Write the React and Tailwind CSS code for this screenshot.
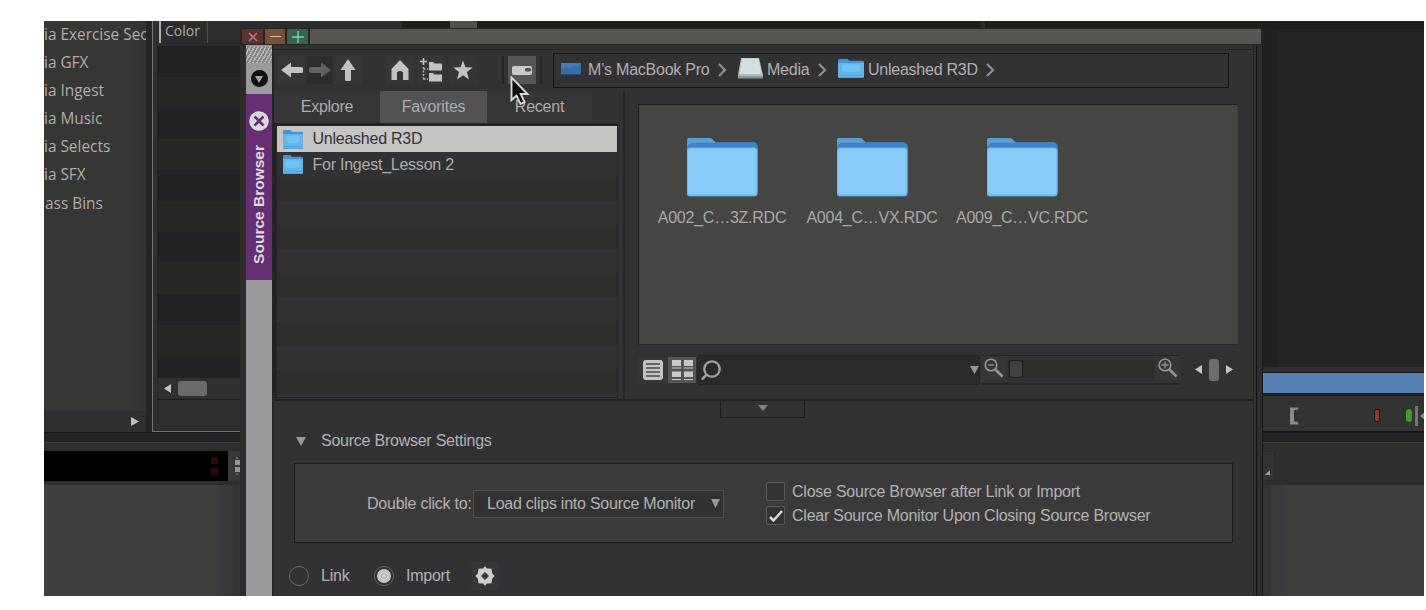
import React from "react";

const bins = ["ia Exercise Sec", "ia GFX", "ia Ingest", "ia Music", "ia Selects", "ia SFX", "ass Bins"];
const clips = ["A002_C…3Z.RDC", "A004_C…VX.RDC", "A009_C…VC.RDC"];

function Triangle({ dir = "down", className = "" }) {
  const points = {
    down: "0,0 10,0 5,10",
    left: "10,0 10,10 0,5",
    right: "0,0 10,5 0,10",
  };
  return (
    <svg viewBox="0 0 10 10" preserveAspectRatio="none" className={`shrink-0 ${className}`}>
      <polygon points={points[dir]} fill="currentColor" />
    </svg>
  );
}

function SmallFolder({ className = "" }) {
  return (
    <svg viewBox="0 0 21 19" preserveAspectRatio="none" className={`shrink-0 ${className}`}>
      <path d="M0 1.500Q0 0 1 0H7.500L9.500 1.700H20Q21 1.700 21 3V18Q21 19 20 19H1Q0 19 0 18Z" fill="#4396d0" />
      <path d="M0 4H21V17.500Q21 18.500 20 18.500H1Q0 18.500 0 17.500Z" fill="#63b4ea" />
      <path d="M3 5.500H18V12Q10.500 15 3 12Z" fill="#72c1f3" />
      <path d="M1 16.500H20" stroke="#4e9fd8" strokeWidth=".7" />
    </svg>
  );
}

function BigFolder() {
  return (
    <svg viewBox="0 0 72 60" className="h-[60px] w-[72px]">
      <path d="M1 4Q1 1 3 1H24Q26 1 28 4L30 5.500H68Q71.500 6 71.500 10V56Q71.500 59.500 68 59.500H4Q1 59.500 1 56Z" fill="#5a9fd6" />
      <path d="M1 13V9Q1 5.500 4 5.500H68Q71.500 6 71.500 10V13Z" fill="#3d83c8" />
      <path d="M1 5Q1 1 3 1H24Q26 1 29 5.500L5 6Q2 7 1 10Z" fill="#5b9fd0" />
      <path d="M1 14Q1 10.500 4 10.500H68Q71.500 10.500 71.500 14V55.500Q71.500 59 68 59H4Q1 59 1 55.500Z" fill="#6db9ee" />
      <path d="M2 14Q2 11.500 5 11.500H68Q70.500 11.500 70.500 14V54Q70.500 57.500 68 57.500H5Q2 57.500 2 54Z" fill="#89cbf8" />
    </svg>
  );
}

function ToolButton({ className = "", children }) {
  return <div className={`flex h-7 shrink-0 items-center justify-center ${className}`}>{children}</div>;
}

function Chevron() {
  return (
    <svg viewBox="0 0 9 14" className="h-[14px] w-[9px] shrink-0">
      <path d="M1 1L7 7L1 13" fill="none" stroke="#8f8f8f" strokeWidth="2.2" />
    </svg>
  );
}

function Magnifier({ plus }) {
  return (
    <svg viewBox="0 0 20 20" className="mb-0.5 h-5 w-5">
      <circle cx="7" cy="7" r="5.800" fill="none" stroke="#949494" strokeWidth="1.600" />
      <path d={plus ? "M3.500 7H10.500M7 3.500V10.500" : "M4 7H10"} stroke="#949494" strokeWidth="1.300" />
      <path d="M11.500 11.500L18.500 18.500" stroke="#949494" strokeWidth="2.600" />
    </svg>
  );
}

function BinSidebar() {
  return (
    <div className="flex w-[108px] shrink-0 flex-col bg-[#252527]">
      <div className="-mt-px w-[102px] flex-1 overflow-hidden bg-gradient-to-r from-[#363634] from-85% to-[#323234] font-['Open_Sans',sans-serif] text-[15.4px] text-[#adadad]">
        {bins.map((bin) => (
          <div key={bin} className="flex h-[28.2px] items-center whitespace-nowrap">
            {bin === "ass Bins" ? <span className="pl-px">{bin}</span> : bin}
          </div>
        ))}
      </div>
      <div className="flex h-[21px] w-[102px] items-center justify-end bg-[#2f2f31] pr-[7px] text-[#c0c0c0]">
        <Triangle dir="right" className="h-[9px] w-[8px]" />
      </div>
    </div>
  );
}

function ColorBin() {
  return (
    <div className="flex w-[250px] shrink-0 flex-col border-b border-l border-[#737373] bg-[#2f2f31] pl-1">
      <div className="flex h-[25px] items-start bg-[#2c2c2c] pl-0.5">
        <div className="flex h-[22px] w-[49px] items-start border-l-2 border-r border-l-[#b0b0b0] border-r-[#505054] pl-1 font-['Open_Sans',sans-serif] text-sm leading-[20px] text-[#a8a8a8]">
          Color
        </div>
      </div>
      <div className="flex flex-1 flex-col overflow-hidden">
        {[...Array(11)].map((_, i) => (
          <div key={i} className="h-[31px] shrink-0 odd:bg-[#222224] even:bg-[#272725]" />
        ))}
      </div>
      <div className="flex h-[22px] items-center gap-[7px] border-b border-[#1c1c1c] bg-[#303030] pb-px pl-[7px] text-[#c4c4c4]">
        <Triangle dir="left" className="h-[9px] w-[7px]" />
        <div className="h-[15px] w-[29px] rounded-[3px] bg-[#6b6b6b]" />
      </div>
      <div className="h-[31px]" />
    </div>
  );
}

function MonitorPane() {
  return (
    <div className="flex flex-1 flex-col bg-[#1e1e1c]">
      <div className="flex h-2 items-start">
        <div className="ml-[48px] h-[7px] w-[27px] bg-[#50504e]" />
        <div className="ml-[504px] h-[7px] w-1 bg-[#2c2c2c]" />
      </div>
      <div className="flex-1 bg-[#232325] pl-[860px]">
        <div className="h-full w-[16px] bg-[#20201e]" />
      </div>
      <div className="h-[6px] border-b border-[#161616] bg-[#303032]" />
      <div className="h-5 bg-[#5680b1]" />
      <div className="h-[3px] border-y border-[#161616] bg-[#2c2c2e]" />
      <div className="flex h-[36px] items-center border-b border-[#141414] bg-[#333331] pl-[888px] pt-[4px]">
        <svg viewBox="0 0 9 18" className="h-[18px] w-[9px] shrink-0">
          <path d="M0 .5H9L7 3H4V14.500H7L9 17.500H0Z" fill="#8b8b8f" />
        </svg>
        <div className="ml-[75px] h-[13px] w-[6px] shrink-0 rounded-[2px] border border-[#181818] bg-[#8d3b24]" />
        <div className="ml-[26px] h-[13px] w-[6px] shrink-0 rounded-[3px] bg-[#459a2d]" />
        <div className="ml-[3px] h-5 w-[3px] shrink-0 bg-[#76767a]" />
        <Triangle dir="left" className="ml-0.5 h-[10px] w-[6px] text-[#8d8d8d]" />
      </div>
    </div>
  );
}

// Everything that sits behind the Source Browser window
function Workspace() {
  return (
    <div className="flex h-full flex-col">
      <div className="flex h-[411px] shrink-0">
        <BinSidebar />
        <ColorBin />
        <MonitorPane />
      </div>
      <div className="h-[11px] shrink-0 border-b border-[#414141] border-t border-t-[#171717] bg-[#222224]" />
      <div className="flex h-[42px] shrink-0 bg-[#2e2e2c] pb-1 pt-2">
        <div className="flex w-[184px] flex-col items-end justify-center gap-1 bg-black pr-[10px]">
          <div className="h-[7px] w-[7px] bg-[#370707]" />
          <div className="h-[7px] w-[7px] bg-[#370707]" />
        </div>
        <div className="flex w-[40px] items-center bg-[#38383a] pl-[7px]">
          <svg viewBox="0 0 8 18" className="h-[18px] w-2">
            <path d="M0 3H5V8H0ZM0 10H5V15H0ZM6 3H8V8H6ZM6 10H8V15H6ZM1 .5H3V1.500H1ZM1 16.500H3V17.500H1Z" fill="#969696" />
          </svg>
        </div>
        <div className="ml-[967px] flex w-[40px] items-end justify-end border border-[#292929] bg-[#333331] pb-[5px] pr-1">
          <svg viewBox="0 0 5 5" className="h-[5px] w-[5px]">
            <polygon points="5,0 5,5 0,5" fill="#a0a0a0" />
          </svg>
        </div>
      </div>
      <div className="flex flex-1 bg-[#3e3e3c]">
        <div className="ml-[175px] w-[14px] bg-[#39393b]" />
        <div className="w-[1038px] bg-[#343434]" />
        <div className="w-[14px] bg-[#3a3a3c]" />
      </div>
    </div>
  );
}

function TitleBar() {
  return (
    <div className="flex h-[17px] shrink-0 gap-0.5 bg-[#252523] pb-px pl-0.5 pr-0.5 pt-px">
      <div className="flex w-[21px] items-center justify-center bg-[#5b3233]">
        <svg viewBox="0 0 10 10" className="h-[10px] w-[10px]">
          <path d="M1 1L9 9M9 1L1 9" stroke="#bf7470" strokeWidth="1.500" />
        </svg>
      </div>
      <div className="flex w-[20px] items-center justify-center bg-[#75503b]">
        <div className="h-[1.5px] w-[11px] bg-[#dfb9a7]" />
      </div>
      <div className="flex w-[21px] items-center justify-center bg-[#3b6150]">
        <svg viewBox="0 0 12 12" className="h-3 w-3">
          <path d="M6 0V12M0 6H12" stroke="#78d0a8" strokeWidth="1.500" />
        </svg>
      </div>
      <div className="flex-1 bg-[#565653]" />
    </div>
  );
}

function SideTab() {
  return (
    <div className="flex w-[26px] shrink-0 flex-col bg-[#9a9a9c] pt-px">
      <div className="h-[17px] bg-[repeating-linear-gradient(120deg,#b5b5b5_0_1.5px,#858585_1.5px_3.4px)]" />
      <div className="flex h-[31px] items-center justify-center bg-[#9b9b9b]">
        <div className="flex h-[17px] w-[17px] items-center justify-center rounded-full bg-[#10100f] text-[#a5a5a5]">
          <Triangle className="mt-px h-[7px] w-[8px]" />
        </div>
      </div>
      <div className="flex h-[186px] flex-col items-center bg-[#662f74] pt-[17px]">
        <svg viewBox="0 0 20 20" className="h-5 w-5 shrink-0">
          <circle cx="10" cy="10" r="9.800" fill="#dadada" />
          <path d="M5.500 5.500L14.500 14.500M14.500 5.500L5.500 14.500" stroke="#662f74" strokeWidth="2.600" />
        </svg>
        <div className="mt-[14px] rotate-180 whitespace-nowrap text-[15.5px] font-bold leading-[22px] text-[#dcdcdc] [writing-mode:vertical-rl]">
          Source Browser
        </div>
      </div>
    </div>
  );
}

function Toolbar() {
  return (
    <div className="mt-1 flex h-[42px] shrink-0 items-center border-t border-[#222222] pb-px pl-1">
      <ToolButton className="w-[27px] bg-[#363636]">
        <svg viewBox="0 0 22 16" className="h-4 w-[22px]">
          <path d="M0 8L10 0.500V5H20.500Q22 5 22 6.500V9.500Q22 11 20.500 11H10V15.500Z" fill="#c3c3c3" />
        </svg>
      </ToolButton>
      <ToolButton className="ml-0.5 w-[25px] bg-[#2c2c2c]">
        <svg viewBox="0 0 22 16" className="h-4 w-[22px]">
          <path d="M22 8L12 0.500V5H1.500Q0 5 0 6.500V9.500Q0 11 1.500 11H12V15.500Z" fill="#626264" />
        </svg>
      </ToolButton>
      <ToolButton className="ml-0.5 w-7 bg-[#363636]">
        <svg viewBox="0 0 16 22" className="h-[22px] w-4">
          <path d="M8 0L15.500 11H11V20.500Q11 22 9.500 22H6.500Q5 22 5 20.500V11H.5Z" fill="#c3c3c3" />
        </svg>
      </ToolButton>
      <ToolButton className="ml-6 w-7 bg-[#363636]">
        <svg viewBox="0 0 20 20" className="h-5 w-5">
          <path d="M10 0L18.500 9V20H13V13Q13 11 10 11Q7 11 7 13V20H1.500V9Z" fill="#c3c3c3" />
        </svg>
      </ToolButton>
      <ToolButton className="ml-[3px] w-[28px] bg-[#363636]">
        <svg viewBox="0 0 22 24" className="h-6 w-[22px]">
          <path d="M9 4H13L14.500 5.500H22V12.500H9ZM9 15H13L14.500 16.500H22V23.500H9Z" fill="#c3c3c3" />
          <path d="M3.500 0V7M0 3.500H7" stroke="#c3c3c3" strokeWidth="1.500" />
          <path d="M3.500 9V22M3.500 11H8M3.500 21H8" fill="none" stroke="#b5b5b5" strokeWidth="1.500" strokeDasharray="2 1.500" />
        </svg>
      </ToolButton>
      <ToolButton className="ml-[4px] w-7 bg-[#363636]">
        <svg viewBox="0 0 20 20" className="h-5 w-5">
          <polygon points="10,0.500 12.500,7.200 19.700,7.500 14,12 16,19.500 10,15.200 4,19.500 6,12 .3,7.500 7.500,7.200" fill="#c3c3c3" />
        </svg>
      </ToolButton>
      <div className="ml-[25px] h-7 w-0.5 shrink-0 bg-[#252525]" />
      <ToolButton className="ml-1 w-7 bg-[#565658]">
        <svg viewBox="0 0 20 9" className="h-[9px] w-5">
          <rect width="20" height="9" rx="2" fill="#cacaca" />
          <rect x="13" y="2" width="6" height="3.500" rx="1.500" fill="#505050" />
        </svg>
      </ToolButton>
      <div className="ml-[4px] h-7 w-0.5 shrink-0 bg-[#252525]" />
      <div className="ml-[11px] flex h-[35px] w-[676px] shrink-0 items-center border border-[#141414] bg-[#323234] pl-[7px] text-base tracking-[-0.24px] text-[#b0b0b0]">
        <svg viewBox="0 0 20 12" className="mb-0.5 h-3 w-5 shrink-0">
          <rect width="20" height="12" fill="#3a6da8" />
          <path d="M0 0H20L17 5L13 3L9 6L5 4L0 7Z" fill="#4379b4" />
          <path d="M0 11.500H20" stroke="#27486e" />
        </svg>
        <span className="ml-[7px] w-[122px] whitespace-nowrap">M’s MacBook Pro</span>
        <div className="ml-[8px]"><Chevron /></div>
        <svg viewBox="0 0 25 21" className="mb-[3px] ml-[11px] h-[21px] w-[25px] shrink-0">
          <path d="M3 0H21L25 17V20H0V17Z" fill="#b2b9bc" />
          <path d="M4 .5H20.500L23.500 16H1.500Z" fill="#d4dde1" />
          <path d="M0 18H25V20.500H0Z" fill="#8d9597" />
        </svg>
        <span className="ml-[4px] w-[43px]">Media</span>
        <div className="ml-2"><Chevron /></div>
        <SmallFolder className="mb-[3px] ml-[11px] h-[19px] w-[26px]" />
        <span className="ml-[4px] w-[110px] whitespace-nowrap">Unleashed R3D</span>
        <div className="ml-2"><Chevron /></div>
      </div>
    </div>
  );
}

function FavoritesPane() {
  return (
    <div className="flex w-[349px] shrink-0 flex-col text-base tracking-[-0.24px] text-[#adadad]">
      <div className="flex h-8 shrink-0">
        <div className="flex w-[106px] items-center justify-center bg-[#363636]">Explore</div>
        <div className="flex w-[107px] items-center justify-center bg-[#525254]">Favorites</div>
        <div className="flex w-[105px] items-center justify-center bg-[#363636]">Recent</div>
      </div>
      <div className="mr-[5px] flex h-[275px] flex-col overflow-hidden border-b border-l-[3px] border-r border-t-[3px] border-[#242424]">
        <div className="flex h-[26px] shrink-0 items-center gap-[9.500px] bg-[#c6c6c5] pl-[6px] text-[#333333]">
          <SmallFolder className="h-[19px] w-5" />
          Unleashed R3D
        </div>
        <div className="flex h-[25px] shrink-0 items-center gap-[9.500px] bg-[#323234] pl-[6px]">
          <SmallFolder className="h-[19px] w-5" />
          For Ingest_Lesson 2
        </div>
        {[...Array(10)].map((_, i) => (
          <div key={i} className="h-[24.1px] shrink-0 odd:bg-[#2d2d2b] even:bg-[#323234]" />
        ))}
      </div>
    </div>
  );
}

function ClipsPane() {
  return (
    <div className="flex flex-col border-l-2 border-[#262628] pl-[13px] pt-[13px]">
      <div className="flex h-[241px] w-[600px] border border-[#1d1d1b] border-b-[#2a2a2a] border-r-[#3c3c3e] bg-[#454543] pl-[8px] pt-[32px]">
        {clips.map((clip) => (
          <div key={clip} className="flex w-[150px] flex-col items-center text-base tracking-[-0.24px] text-[#a9a9a9]">
            <BigFolder />
            <span className="mt-[9px] whitespace-nowrap">{clip}</span>
          </div>
        ))}
      </div>
      <div className="mt-[9px] flex h-[31px] items-center">
        <div className="flex h-[26px] w-[29px] shrink-0 items-center justify-center bg-[#363636]">
          <svg viewBox="0 0 20 20" className="h-5 w-5">
            <rect width="20" height="20" rx="3" fill="#c2c2c2" />
            <path d="M3 4H17M3 8H17M3 12H17M3 16H17" stroke="#4a4a4a" strokeWidth="1.700" />
          </svg>
        </div>
        <div className="ml-px flex h-[26px] w-7 shrink-0 items-center justify-center bg-[#565656]">
          <svg viewBox="0 0 21 20" className="h-5 w-[21px]">
            <path d="M0 0H9V6H0ZM12 0H21V6H12ZM0 7.500H9V8.500H0ZM12 7.500H21V8.500H12ZM0 11.500H9V17H0ZM12 11.500H21V17H12ZM0 19H9V20H0ZM12 19H21V20H12Z" fill="#c8c8c8" />
          </svg>
        </div>
        <div className="ml-px flex h-[30px] w-[283px] shrink-0 items-center justify-between rounded-[2px] border border-[#232323] bg-[#2a2a2a] pl-[3px]">
          <svg viewBox="0 0 20 20" className="h-5 w-5">
            <circle cx="11" cy="9" r="7.700" fill="none" stroke="#a2a2a2" strokeWidth="2.300" />
            <path d="M5.500 14.500L1 19.500" stroke="#a2a2a2" strokeWidth="2.600" />
          </svg>
          <Triangle className="h-2 w-[9px] text-[#989898]" />
        </div>
        <div className="ml-px flex h-[30px] w-[200px] shrink-0 items-center rounded-[2px] border-b-2 border-t border-b-[#272725] border-t-[#252525]">
          <div className="flex h-[26px] w-[26px] items-center justify-center bg-[#363636]"><Magnifier /></div>
          <div className="flex h-[18px] flex-1 items-center bg-[#2d2d2b] pl-0.5">
            <div className="h-[18px] w-[14px] rounded-[3px] border border-[#1e1e1e] bg-[#414143]" />
          </div>
          <div className="flex h-[26px] w-[26px] items-center justify-center bg-[#363636]"><Magnifier plus /></div>
        </div>
        <div className="ml-[14px] flex items-center gap-[7px] text-[#c4c4c4]">
          <Triangle dir="left" className="h-[9px] w-[7px]" />
          <div className="h-[22px] w-[10px] rounded-[3px] bg-[#6d6d6d]" />
          <Triangle dir="right" className="h-[9px] w-[7px]" />
        </div>
      </div>
    </div>
  );
}

function CheckOption({ label, checked }) {
  return (
    <div className="flex h-6 items-center gap-[7px] whitespace-nowrap">
      <div className="flex h-[19px] w-[19px] items-center justify-center rounded-[2px] border border-[#5a5a58] bg-[#333333]">
        {checked && (
          <svg viewBox="0 0 14 12" className="h-3 w-[14px]">
            <path d="M1 7L4.500 10.500L13 1" fill="none" stroke="#dadada" strokeWidth="2.500" />
          </svg>
        )}
      </div>
      {label}
    </div>
  );
}

function Radio({ checked }) {
  return (
    <div className="flex h-5 w-5 items-center justify-center rounded-full border border-[#666664]">
      {checked && <div className="h-[14px] w-[14px] rounded-full bg-[#c5c5c5]" />}
    </div>
  );
}

function SettingsPane() {
  return (
    <div className="flex flex-1 flex-col border-t-2 border-[#202020] text-base tracking-[-0.24px] text-[#b2b2b2]">
      <div className="ml-[446px] flex h-[17px] w-[85px] items-start justify-center border-x border-b border-[#1d1d1d] pt-1 text-[#848484]">
        <Triangle className="h-[6px] w-[10px]" />
      </div>
      <div className="ml-[22px] mt-[11px] flex h-6 items-center gap-[15px]">
        <Triangle className="h-[9px] w-[10px] text-[#989898]" />
        Source Browser Settings
      </div>
      <div className="ml-5 mt-[10px] flex h-[80px] w-[939px] shrink-0 items-center border border-[#1c1c1c] bg-[#3a3a3b] pl-[72px] pt-px">
        <span className="w-[106px] whitespace-nowrap">Double click to:</span>
        <div className="flex h-7 w-[251px] items-center justify-between border border-[#50504c] bg-[#323234] pl-[13px] pr-[3px]">
          <span className="whitespace-nowrap">Load clips into Source Monitor</span>
          <Triangle className="h-[9px] w-[9px] text-[#989898]" />
        </div>
        <div className="ml-[42px] flex flex-col">
          <CheckOption label="Close Source Browser after Link or Import" />
          <CheckOption label="Clear Source Monitor Upon Closing Source Browser" checked />
        </div>
      </div>
      <div className="ml-[15px] mt-[18px] flex h-[30px] items-center">
        <Radio />
        <span className="ml-3 w-[53px]">Link</span>
        <Radio checked />
        <span className="ml-3 w-[65px]">Import</span>
        <div className="flex h-7 w-7 items-center justify-center bg-[#363634]">
          <svg viewBox="0 0 20 20" className="h-5 w-5">
            <path
              fillRule="evenodd"
              d="M8 2.500L10 .3L12 2.500L16.500 2.800L17.300 7.500L19.700 10L17.300 12.500L16.500 17.200L12 17.500L10 19.700L8 17.500L3.500 17.200L2.700 12.500L.3 10L2.700 7.500L3.500 2.800ZM10 6L6 10L10 14L14 10Z"
              fill="#cdcdcd"
            />
          </svg>
        </div>
      </div>
    </div>
  );
}

function SourceBrowser() {
  return (
    <div className="absolute left-[196px] top-[7px] flex h-[568px] w-[1023px] flex-col overflow-hidden bg-[#2c2c2a] font-['Liberation_Sans',sans-serif] leading-normal">
      <TitleBar />
      <div className="flex flex-1 pl-[6px]">
        <SideTab />
        <div className="flex w-[982px] flex-col border-l-2 border-r border-[#242424] bg-[#323234]">
          <Toolbar />
          <div className="flex h-[308px] shrink-0">
            <FavoritesPane />
            <ClipsPane />
          </div>
          <SettingsPane />
        </div>
        <div className="w-[3px] border-r border-[#121212] bg-[#303032]" />
        <div className="flex-1 border-r border-[#181818] bg-[#2e2e2e]" />
      </div>
    </div>
  );
}

export default function App() {
  return (
    <div className="h-[610px] w-[1426px] overflow-hidden bg-white pl-[44px] pt-[21px]">
      <div className="relative h-[575px] w-[1380px] overflow-hidden bg-[#232325]">
        <Workspace />
        <SourceBrowser />
        <svg viewBox="0 0 20 30" className="absolute left-[466px] top-[55px] h-[30px] w-5">
          <path d="M1.500 1.500V24L6.500 19.500L10.500 28L14.500 26L10.700 18H17.500Z" fill="#0a0a0a" stroke="#d8d8d8" strokeWidth="1.900" />
        </svg>
      </div>
    </div>
  );
}
